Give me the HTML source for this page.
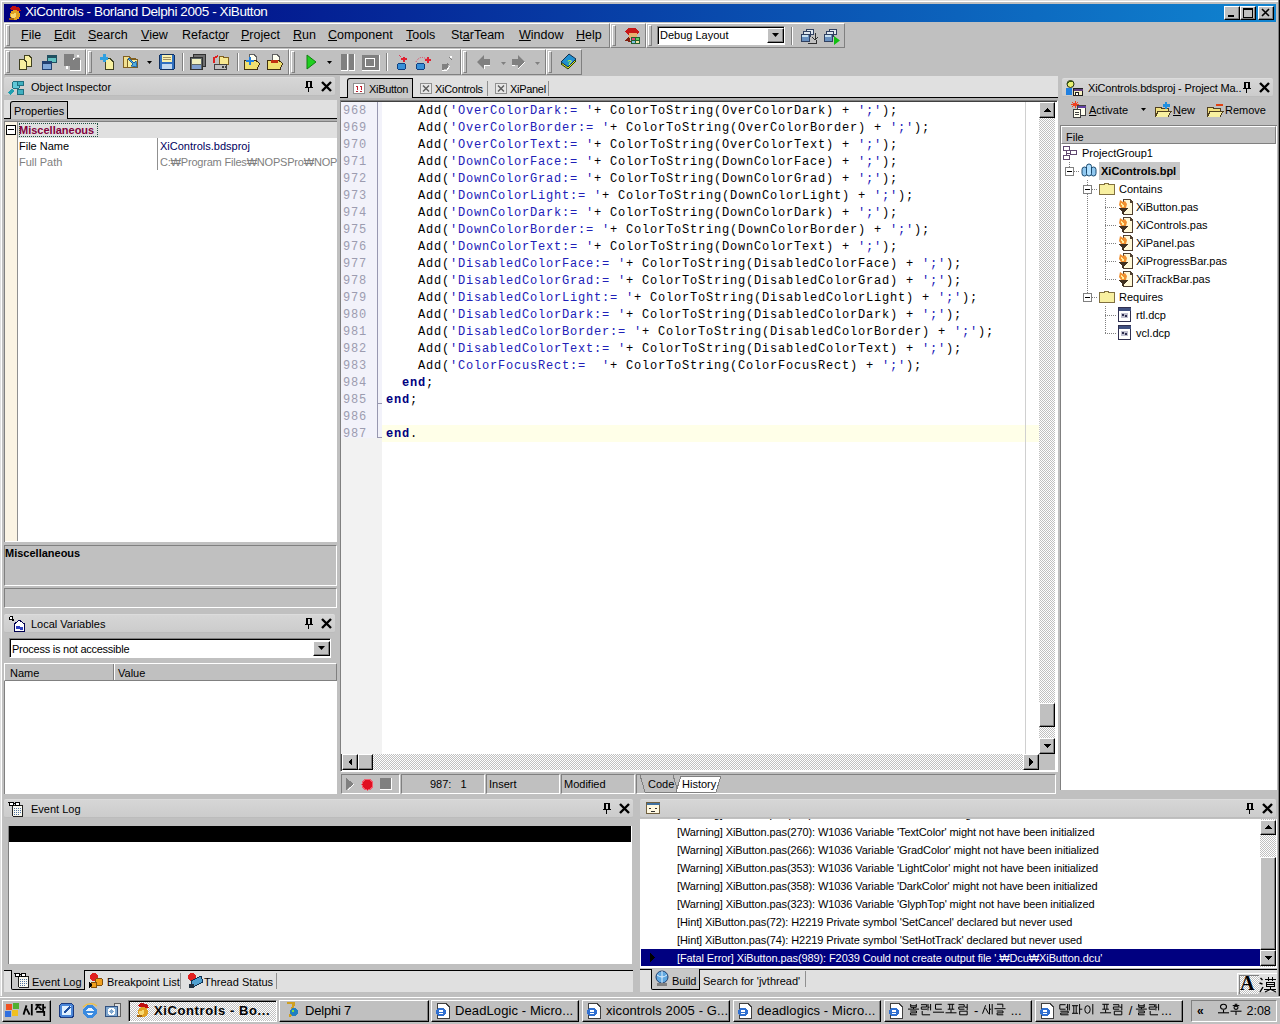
<!DOCTYPE html><html><head><meta charset="utf-8"><style>
*{margin:0;padding:0;box-sizing:border-box}
html,body{width:1280px;height:1024px;overflow:hidden;background:#c0c0c0;font-family:"Liberation Sans",sans-serif;font-size:11px;color:#000}
div,svg{position:absolute}
svg{overflow:visible}
.t{white-space:pre}
.r{border-top:1px solid #fff;border-left:1px solid #fff;border-right:1px solid #808080;border-bottom:1px solid #808080}
.r2{border-top:1px solid #fff;border-left:1px solid #fff;border-right:1px solid #000;border-bottom:1px solid #000;box-shadow:inset -1px -1px 0 #808080;background:#c0c0c0}
.sk{border-top:1px solid #808080;border-left:1px solid #808080;border-right:1px solid #fff;border-bottom:1px solid #fff}
.sk2{border-top:1px solid #808080;border-left:1px solid #808080;border-right:1px solid #fff;border-bottom:1px solid #fff;box-shadow:inset 1px 1px 0 #000}
.g{width:4px;border-left:1px solid #fff;border-right:1px solid #808080;border-top:1px solid #fff;border-bottom:1px solid #808080}
.sp{width:2px;border-left:1px solid #808080;border-right:1px solid #fff}
.u{text-decoration:underline}
.c{font-family:"Liberation Mono",monospace;font-size:12px;letter-spacing:0.8px;line-height:17px;white-space:pre}
.s{color:#2020b8}
.k{color:#000080;font-weight:bold}
.dith{background-color:#fff;background-image:linear-gradient(45deg,#c0c0c0 25%,transparent 25%,transparent 75%,#c0c0c0 75%),linear-gradient(45deg,#c0c0c0 25%,transparent 25%,transparent 75%,#c0c0c0 75%);background-size:2px 2px;background-position:0 0,1px 1px}
.ttl{background:linear-gradient(to bottom,#d6d6d6,#cccccc);border-top:1px solid #dcdcdc;border-bottom:1px solid #bcbcbc}
</style></head><body>
<div style="left:0px;top:0px;width:1280px;height:996px;border-top:1px solid #dfdfdf;border-left:1px solid #dfdfdf"></div>
<div style="left:1px;top:1px;width:1279px;height:995px;border-top:1px solid #fff;border-left:1px solid #fff"></div>
<div style="left:4px;top:4px;width:1272px;height:18px;background:linear-gradient(to right,#000080,#1084d0)"></div>
<div style="left:1278px;top:0px;width:1px;height:996px;background:#808080"></div>
<div style="left:1279px;top:0px;width:1px;height:996px;background:#000"></div>
<svg style="left:6px;top:5px" width="16" height="16" viewBox="0 0 16 16" shape-rendering="crispEdges"><path d="M3 4 L7 1 L13 2 L15 6 L12 6 Z" fill="#c01010"/><ellipse cx="9" cy="10" rx="5" ry="5" fill="#e0a020"/><path d="M5 9 L10 8 L10 12 L6 14 Z" fill="#f8d870"/><rect x="3" y="13" width="5" height="2" fill="#a06010"/></svg>
<div class="t" style="left:25px;top:5px;font-size:13.5px;line-height:13.5px;letter-spacing:-0.4px;color:#fff">XiControls - Borland Delphi 2005 - XiButton</div>
<div class="r2" style="left:1224px;top:6px;width:16px;height:14px;"></div>
<div class="r2" style="left:1240px;top:6px;width:16px;height:14px;"></div>
<div class="r2" style="left:1258px;top:6px;width:16px;height:14px;"></div>
<svg style="left:1224px;top:6px" width="50" height="14" viewBox="0 0 50 14" shape-rendering="crispEdges"><rect x="4" y="9" width="6" height="2" fill="#000"/><rect x="19" y="2" width="9" height="9" fill="none" stroke="#000"/><rect x="19" y="2" width="9" height="2" fill="#000"/><path d="M38 3 L45 10 M45 3 L38 10" stroke="#000" stroke-width="1.6" shape-rendering="geometricPrecision"/></svg>
<div class="r" style="left:4px;top:23px;width:606px;height:25px;"></div>
<div class="g" style="left:6px;top:25px;width:4px;height:21px;"></div>
<div class="t" style="left:21px;top:29px;font-size:12.5px;line-height:12.5px;"><span class="u">F</span>ile</div>
<div class="t" style="left:54px;top:29px;font-size:12.5px;line-height:12.5px;"><span class="u">E</span>dit</div>
<div class="t" style="left:88px;top:29px;font-size:12.5px;line-height:12.5px;"><span class="u">S</span>earch</div>
<div class="t" style="left:141px;top:29px;font-size:12.5px;line-height:12.5px;"><span class="u">V</span>iew</div>
<div class="t" style="left:182px;top:29px;font-size:12.5px;line-height:12.5px;">Refact<span class="u">o</span>r</div>
<div class="t" style="left:241px;top:29px;font-size:12.5px;line-height:12.5px;"><span class="u">P</span>roject</div>
<div class="t" style="left:293px;top:29px;font-size:12.5px;line-height:12.5px;"><span class="u">R</span>un</div>
<div class="t" style="left:328px;top:29px;font-size:12.5px;line-height:12.5px;"><span class="u">C</span>omponent</div>
<div class="t" style="left:406px;top:29px;font-size:12.5px;line-height:12.5px;"><span class="u">T</span>ools</div>
<div class="t" style="left:451px;top:29px;font-size:12.5px;line-height:12.5px;">St<span class="u">a</span>rTeam</div>
<div class="t" style="left:519px;top:29px;font-size:12.5px;line-height:12.5px;"><span class="u">W</span>indow</div>
<div class="t" style="left:576px;top:29px;font-size:12.5px;line-height:12.5px;"><span class="u">H</span>elp</div>
<div class="r" style="left:610px;top:23px;width:36px;height:25px;"></div>
<div class="g" style="left:612px;top:25px;width:4px;height:21px;"></div>
<svg style="left:623px;top:27px" width="18" height="17" viewBox="0 0 18 17" shape-rendering="crispEdges"><path d="M2 4 L6 1 L13 1 L16 5 L13 8 L5 8 Z" fill="#c81818"/><rect x="6" y="6" width="8" height="5" fill="#e8b070"/><path d="M2 14 L6 9 L8 15 Z" fill="#802010"/><rect x="8" y="10" width="9" height="7" fill="#206030"/><rect x="9" y="11" width="3" height="2" fill="#e04080"/><rect x="13" y="11" width="3" height="2" fill="#60d060"/><rect x="9" y="14" width="3" height="2" fill="#80c0e0"/><rect x="13" y="14" width="3" height="2" fill="#f0e0a0"/></svg>
<div class="r" style="left:646px;top:23px;width:199px;height:25px;"></div>
<div class="g" style="left:648px;top:25px;width:4px;height:21px;"></div>
<div class="sk2" style="left:657px;top:26px;width:128px;height:19px;background:#fff"></div>
<div class="t" style="left:660px;top:30px;font-size:11px;line-height:11px;">Debug Layout</div>
<div class="r2" style="left:767px;top:28px;width:17px;height:15px;"></div>
<svg style="left:772px;top:33px" width="7" height="4" viewBox="0 0 7 4" shape-rendering="crispEdges"><path d="M0 0 H7 L3.5 4 Z" fill="#000" shape-rendering="geometricPrecision"/></svg>
<div class="sp" style="left:791px;top:27px;width:2px;height:18px;"></div>
<svg style="left:800px;top:28px" width="17" height="17" viewBox="0 0 17 17" shape-rendering="crispEdges"><rect x="6" y="1" width="7" height="5" fill="#e0e8f0" stroke="#304060"/><rect x="3" y="3" width="7" height="5" fill="#e0e8f0" stroke="#304060"/><rect x="1" y="6" width="8" height="7" fill="#6890c0" stroke="#304060"/><rect x="2" y="7" width="6" height="2" fill="#c8e0f0"/></svg>
<svg style="left:823px;top:28px" width="17" height="17" viewBox="0 0 17 17" shape-rendering="crispEdges"><rect x="6" y="1" width="7" height="5" fill="#e0e8f0" stroke="#304060"/><rect x="3" y="3" width="7" height="5" fill="#e0e8f0" stroke="#304060"/><rect x="1" y="6" width="8" height="7" fill="#6890c0" stroke="#304060"/><rect x="2" y="7" width="6" height="2" fill="#c8e0f0"/></svg>
<svg style="left:810px;top:33px" width="10" height="12" viewBox="0 0 10 12" shape-rendering="crispEdges"><path d="M5 0 V6 M2 4 L5 7 L8 4 M-2 10 H6 V7" stroke="#303030" fill="none"/></svg>
<svg style="left:834px;top:36px" width="6" height="9" viewBox="0 0 6 9" shape-rendering="crispEdges"><path d="M0 0 L6 4.5 L0 9 Z" fill="#10c010" shape-rendering="geometricPrecision"/></svg>
<div class="r" style="left:4px;top:49px;width:82px;height:26px;"></div>
<div class="g" style="left:6px;top:51px;width:4px;height:22px;"></div>
<div class="r" style="left:86px;top:49px;width:203px;height:26px;"></div>
<div class="g" style="left:88px;top:51px;width:4px;height:22px;"></div>
<div class="r" style="left:289px;top:49px;width:172px;height:26px;"></div>
<div class="g" style="left:291px;top:51px;width:4px;height:22px;"></div>
<div class="r" style="left:461px;top:49px;width:85px;height:26px;"></div>
<div class="g" style="left:463px;top:51px;width:4px;height:22px;"></div>
<div class="r" style="left:546px;top:49px;width:36px;height:26px;"></div>
<div class="g" style="left:548px;top:51px;width:4px;height:22px;"></div>
<div class="sp" style="left:182px;top:53px;width:2px;height:18px;"></div>
<div class="sp" style="left:237px;top:53px;width:2px;height:18px;"></div>
<div class="sp" style="left:386px;top:53px;width:2px;height:18px;"></div>
<svg style="left:18px;top:54px" width="17" height="17" viewBox="0 0 17 17" shape-rendering="crispEdges"><path d="M6.5 1.5 H11 L13.5 4 V12.5 H6.5 Z" fill="#f8f0a0" stroke="#404020"/><path d="M1.5 5.5 H6 L8.5 8 V15.5 H1.5 Z" fill="#f8f0a0" stroke="#404020"/></svg>
<svg style="left:41px;top:54px" width="17" height="17" viewBox="0 0 17 17" shape-rendering="crispEdges"><rect x="6.5" y="1.5" width="9" height="7" fill="#60c0c0" stroke="#205060"/><rect x="6.5" y="1.5" width="9" height="2" fill="#205060"/><rect x="1.5" y="7.5" width="9" height="8" fill="#80a8d8" stroke="#204070"/><rect x="1.5" y="7.5" width="9" height="2" fill="#204070"/></svg>
<svg style="left:64px;top:54px" width="17" height="17" viewBox="0 0 17 17" shape-rendering="crispEdges"><rect x="0" y="0" width="10" height="12" fill="#808080"/><rect x="6" y="4" width="10" height="12" fill="#808080"/><path d="M9 6 V4 H11" stroke="#fff" fill="none"/><path d="M6 16 H16 V6" stroke="#fff" fill="none"/><rect x="13" y="1" width="2" height="2" fill="#fff"/><rect x="2" y="12" width="2" height="3" fill="#fff"/></svg>
<svg style="left:100px;top:54px" width="17" height="17" viewBox="0 0 17 17" shape-rendering="crispEdges"><path d="M5.5 4.5 H10 L13.5 8 V15.5 H5.5 Z" fill="#f8f0a0" stroke="#404020"/><path d="M4 0 V8 M0 4 H8" stroke="#30a0e0" stroke-width="3"/></svg>
<svg style="left:123px;top:54px" width="17" height="17" viewBox="0 0 17 17" shape-rendering="crispEdges"><path d="M0.5 2.5 H6 L8 4.5 H12.5 V13.5 H0.5 Z" fill="#f0e090" stroke="#806020"/><path d="M4.5 5.5 H14.5 V13.5 H4.5 Z" fill="#f8f0a0" stroke="#806020"/><path d="M5 5 L10 10 L8 12 L14 13 L13 7 L11 9 L6 4 Z" fill="#50b0e0" stroke="#2060a0" shape-rendering="geometricPrecision"/></svg>
<svg style="left:147px;top:61px" width="5" height="3" viewBox="0 0 5 3" shape-rendering="crispEdges"><path d="M0 0 H5 L2.5 3 Z" fill="#000" shape-rendering="geometricPrecision"/></svg>
<svg style="left:159px;top:54px" width="17" height="16" viewBox="0 0 17 16" shape-rendering="crispEdges"><rect x="0.5" y="0.5" width="15" height="15" rx="2" fill="#3070c0" stroke="#103060"/><rect x="3" y="1" width="10" height="7" fill="#f8f0b0"/><rect x="4" y="3" width="8" height="1" fill="#a09060"/><rect x="4" y="5" width="8" height="1" fill="#a09060"/><rect x="3" y="10" width="10" height="5" fill="#c0d8f0"/></svg>
<svg style="left:190px;top:54px" width="17" height="17" viewBox="0 0 17 17" shape-rendering="crispEdges"><rect x="3.5" y="0.5" width="12" height="12" fill="#707070" stroke="#303030"/><rect x="0.5" y="3.5" width="12" height="12" fill="#606868" stroke="#303030"/><rect x="2" y="5" width="9" height="5" fill="#f0f0c0"/><rect x="2" y="11" width="9" height="4" fill="#80a0d0"/></svg>
<svg style="left:213px;top:54px" width="17" height="17" viewBox="0 0 17 17" shape-rendering="crispEdges"><path d="M6.5 2.5 H10 L11 3.5 H15.5 V10.5 H6.5 Z" fill="#f8e890" stroke="#806020"/><path d="M1 9 V4 L5 2" stroke="#e02020" stroke-width="1.5" fill="none"/><rect x="1.5" y="10.5" width="12" height="5" fill="#c0c0c0" stroke="#404040"/><rect x="9" y="12" width="2" height="2" fill="#404040"/><rect x="12" y="12" width="1" height="2" fill="#404040"/></svg>
<svg style="left:244px;top:54px" width="17" height="17" viewBox="0 0 17 17" shape-rendering="crispEdges"><path d="M5.5 0.5 H10 L12.5 3 V10.5 H5.5 Z" fill="#fffff0" stroke="#606060"/><path d="M0.5 6.5 H12 L15.5 9.5 L13 15.5 H0.5 Z" fill="#f0e070" stroke="#403010"/><path d="M6 3 V11 M2 7 H10" stroke="#2080e0" stroke-width="2.5"/></svg>
<svg style="left:267px;top:54px" width="17" height="17" viewBox="0 0 17 17" shape-rendering="crispEdges"><path d="M5.5 0.5 H10 L12.5 3 V10.5 H5.5 Z" fill="#fffff0" stroke="#606060"/><path d="M0.5 6.5 H12 L15.5 9.5 L13 15.5 H0.5 Z" fill="#f0e070" stroke="#403010"/><rect x="4" y="6" width="7" height="3" fill="#c03010"/></svg>
<svg style="left:306px;top:54px" width="11" height="16" viewBox="0 0 11 16" shape-rendering="crispEdges"><path d="M1 1 L10 8 L1 15 Z" fill="#20d020" stroke="#108010" shape-rendering="geometricPrecision"/></svg>
<svg style="left:327px;top:61px" width="5" height="3" viewBox="0 0 5 3" shape-rendering="crispEdges"><path d="M0 0 H5 L2.5 3 Z" fill="#000" shape-rendering="geometricPrecision"/></svg>
<svg style="left:341px;top:54px" width="14" height="17" viewBox="0 0 14 17" shape-rendering="crispEdges"><rect x="0" y="0" width="6" height="16" fill="#808080"/><rect x="8" y="0" width="5" height="16" fill="#808080"/><path d="M6 0 V16 H0 M13 0 V16 H8" stroke="#fff" fill="none"/></svg>
<svg style="left:362px;top:55px" width="18" height="16" viewBox="0 0 18 16" shape-rendering="crispEdges"><rect x="0" y="0" width="17" height="15" fill="#808080"/><rect x="3.5" y="3.5" width="9" height="8" fill="none" stroke="#fff"/><rect x="5" y="5" width="7" height="6" fill="#808080"/><path d="M0 15 H17 V0" stroke="#fff" fill="none"/></svg>
<svg style="left:397px;top:54px" width="12" height="17" viewBox="0 0 12 17" shape-rendering="crispEdges"><path d="M2 1 L6 5" stroke="#e04060" stroke-dasharray="1 1" fill="none"/><path d="M4 5 H10 M7 3 V8" stroke="#e02030" stroke-width="2"/><rect x="0.5" y="9.5" width="8" height="6" rx="2" fill="#3890d8" stroke="#104080"/></svg>
<svg style="left:415px;top:54px" width="16" height="17" viewBox="0 0 16 17" shape-rendering="crispEdges"><path d="M1 8 Q5 0 13 6" stroke="#e04060" stroke-dasharray="1 1" fill="none" shape-rendering="geometricPrecision"/><path d="M10 6 H16 M13 3 V9" stroke="#e02030" stroke-width="2"/><rect x="1.5" y="9.5" width="8" height="6" rx="2" fill="#3890d8" stroke="#104080"/></svg>
<svg style="left:440px;top:54px" width="14" height="17" viewBox="0 0 14 17" shape-rendering="crispEdges"><path d="M1 15 L7 9 L9 11 L3 16 Z" fill="#808080"/><rect x="2" y="10" width="6" height="5" fill="#808080"/><path d="M9 3 L12 6" stroke="#808080"/><rect x="10" y="2" width="2" height="2" fill="#fff"/><path d="M2 16 H7 L10 12" stroke="#fff" fill="none"/></svg>
<svg style="left:477px;top:55px" width="14" height="15" viewBox="0 0 14 15" shape-rendering="crispEdges"><path d="M0 7 L7 0 V4 H13 V10 H7 V14 Z" fill="#808080" shape-rendering="geometricPrecision"/><path d="M7 14 V10 H13" stroke="#fff" fill="none"/></svg>
<svg style="left:501px;top:62px" width="5" height="3" viewBox="0 0 5 3" shape-rendering="crispEdges"><path d="M0 0 H5 L2.5 3 Z" fill="#808080" shape-rendering="geometricPrecision"/></svg>
<svg style="left:512px;top:55px" width="14" height="15" viewBox="0 0 14 15" shape-rendering="crispEdges"><path d="M13 7 L6 0 V4 H0 V10 H6 V14 Z" fill="#808080" shape-rendering="geometricPrecision"/><path d="M6 14 L13 7 M0 10 H3" stroke="#fff" fill="none"/></svg>
<svg style="left:535px;top:62px" width="5" height="3" viewBox="0 0 5 3" shape-rendering="crispEdges"><path d="M0 0 H5 L2.5 3 Z" fill="#808080" shape-rendering="geometricPrecision"/></svg>
<svg style="left:560px;top:54px" width="17" height="16" viewBox="0 0 17 16" shape-rendering="crispEdges"><path d="M1 10 L9 2 L16 7 L8 15 Z" fill="#e8e820" stroke="#204000" shape-rendering="geometricPrecision"/><path d="M1 8 L9 0 L16 5 L8 13 Z" fill="#2090d0" stroke="#103050" shape-rendering="geometricPrecision"/><text x="7" y="11" font-size="8" font-weight="bold" fill="#c0ff40" font-family="Liberation Sans">?</text></svg>
<div class="ttl" style="left:4px;top:77px;width:331px;height:19px;border-radius:2px"></div>
<div class="t" style="left:31px;top:82px;font-size:11px;line-height:11px;">Object Inspector</div>
<svg style="left:305px;top:81px" width="8" height="11" viewBox="0 0 8 11" shape-rendering="crispEdges"><rect x="1" y="0" width="6" height="1" fill="#000"/><rect x="1" y="0" width="2" height="6" fill="#000"/><rect x="5" y="0" width="2" height="6" fill="#000"/><rect x="0" y="6" width="8" height="1" fill="#000"/><rect x="3" y="7" width="1" height="4" fill="#000"/></svg>
<svg style="left:321px;top:81px" width="11" height="11" viewBox="0 0 11 11" shape-rendering="crispEdges"><path d="M1 1 L10 10 M10 1 L1 10" stroke="#000" stroke-width="2.4" shape-rendering="geometricPrecision"/></svg>
<svg style="left:8px;top:80px" width="18" height="16" viewBox="0 0 18 16" shape-rendering="crispEdges"><circle cx="8" cy="5" r="4" fill="#60c8d8" stroke="#207080"/><rect x="9" y="1" width="6" height="4" fill="#40b0c0" stroke="#207080"/><rect x="9" y="9" width="6" height="5" fill="#40b0c0" stroke="#207080"/><path d="M1 14 L5 10" stroke="#20a0b0" stroke-width="3"/></svg>
<div style="left:4px;top:100px;width:333px;height:18px;background:#e0e0e0"></div>
<div style="left:4px;top:118px;width:333px;height:1px;background:#000"></div>
<div style="left:10px;top:101px;width:58px;height:18px;background:#c8c8c8;border:1px solid #000;border-bottom:none;border-top-left-radius:3px"></div>
<div class="t" style="left:14px;top:106px;font-size:11px;line-height:11px;">Properties</div>
<div style="left:4px;top:119px;width:333px;height:2px;background:#b0b0b0"></div>
<div style="left:4px;top:121px;width:333px;height:421px;background:#fff;border-top:1px solid #808080;border-left:1px solid #808080"></div>
<div style="left:5px;top:122px;width:12px;height:419px;background:#fbf4e4"></div>
<div style="left:17px;top:122px;width:1px;height:419px;background:#909090"></div>
<div style="left:18px;top:122px;width:319px;height:16px;background:#e0e0e0"></div>
<div style="left:19px;top:123px;width:79px;height:14px;border:1px dotted #205040"></div>
<div class="t" style="left:19px;top:125px;font-size:11px;line-height:11px;color:#80003c;font-weight:bold">Miscellaneous</div>
<div style="left:6px;top:125px;width:10px;height:10px;border:1px solid #000;background:#fff"></div>
<div style="left:8px;top:129px;width:6px;height:1px;background:#000"></div>
<div class="t" style="left:19px;top:141px;font-size:11px;line-height:11px;">File Name</div>
<div class="t" style="left:19px;top:157px;font-size:11px;line-height:11px;color:#808080">Full Path</div>
<div style="left:157px;top:138px;width:1px;height:32px;background:#909090"></div>
<div class="t" style="left:160px;top:141px;font-size:11px;line-height:11px;color:#000060">XiControls.bdsproj</div>
<div class="t" style="left:160px;top:157px;font-size:11px;line-height:11px;color:#808080;width:177px;overflow:hidden;letter-spacing:-0.2px">C:&#x20A9;Program Files&#x20A9;NOPSPro&#x20A9;NOPSPro</div>
<div class="sk" style="left:4px;top:545px;width:333px;height:41px;"></div>
<div class="t" style="left:5px;top:548px;font-size:11px;line-height:11px;font-weight:bold">Miscellaneous</div>
<div class="sk" style="left:4px;top:588px;width:333px;height:20px;"></div>
<div class="ttl" style="left:4px;top:614px;width:331px;height:19px;border-radius:2px"></div>
<div class="t" style="left:31px;top:619px;font-size:11px;line-height:11px;">Local Variables</div>
<svg style="left:305px;top:618px" width="8" height="11" viewBox="0 0 8 11" shape-rendering="crispEdges"><rect x="1" y="0" width="6" height="1" fill="#000"/><rect x="1" y="0" width="2" height="6" fill="#000"/><rect x="5" y="0" width="2" height="6" fill="#000"/><rect x="0" y="6" width="8" height="1" fill="#000"/><rect x="3" y="7" width="1" height="4" fill="#000"/></svg>
<svg style="left:321px;top:618px" width="11" height="11" viewBox="0 0 11 11" shape-rendering="crispEdges"><path d="M1 1 L10 10 M10 1 L1 10" stroke="#000" stroke-width="2.4" shape-rendering="geometricPrecision"/></svg>
<svg style="left:9px;top:616px" width="18" height="16" viewBox="0 0 18 16" shape-rendering="crispEdges"><path d="M1 1 L5 5" stroke="#000" stroke-width="1.5"/><circle cx="2" cy="2" r="1.5" fill="#fff" stroke="#000"/><path d="M5.5 8 L10 4 L15.5 8 V15.5 H5.5 Z" fill="#fff" stroke="#000050"/><rect x="7" y="10" width="4" height="3" fill="#3040c0"/><rect x="11" y="11" width="3" height="3" fill="#3040c0"/></svg>
<div class="sk2" style="left:9px;top:638px;width:322px;height:20px;background:#fff"></div>
<div class="t" style="left:12px;top:644px;font-size:11px;line-height:11px;letter-spacing:-0.25px">Process is not accessible</div>
<div class="r2" style="left:313px;top:641px;width:17px;height:15px;"></div>
<svg style="left:318px;top:646px" width="7" height="4" viewBox="0 0 7 4" shape-rendering="crispEdges"><path d="M0 0 H7 L3.5 4 Z" fill="#000" shape-rendering="geometricPrecision"/></svg>
<div class="r" style="left:4px;top:663px;width:333px;height:18px;"></div>
<div style="left:113px;top:664px;width:1px;height:16px;background:#808080"></div>
<div style="left:114px;top:664px;width:1px;height:16px;background:#fff"></div>
<div class="t" style="left:10px;top:668px;font-size:11px;line-height:11px;">Name</div>
<div class="t" style="left:118px;top:668px;font-size:11px;line-height:11px;">Value</div>
<div style="left:4px;top:681px;width:333px;height:113px;background:#fff;border-left:1px solid #808080"></div>
<div style="left:340px;top:76px;width:718px;height:22px;background:#e0e0e0"></div>
<div style="left:340px;top:97px;width:718px;height:1px;background:#000"></div>
<div style="left:340px;top:98px;width:718px;height:2px;background:#b4b4b4"></div>
<div style="left:347px;top:78px;width:66px;height:20px;background:#c8c8c8;border:1px solid #000;border-bottom:none;border-top-left-radius:3px"></div>
<svg style="left:353px;top:83px" width="12" height="11" viewBox="0 0 12 11" shape-rendering="crispEdges"><rect x="0.5" y="0.5" width="11" height="10" fill="#fff" stroke="#909090"/><path d="M3 3 H5 M7 3 H9 M3 8 H5 M7 8 H9 M4 4 V7 M8 4 V7" stroke="#c02030"/></svg>
<div class="t" style="left:369px;top:84px;font-size:11px;line-height:11px;letter-spacing:-0.3px">XiButton</div>
<svg style="left:420px;top:83px" width="12" height="11" viewBox="0 0 12 11" shape-rendering="crispEdges"><rect x="0.5" y="0.5" width="11" height="10" fill="#e8e8e8" stroke="#909090"/><path d="M3 2.5 L9 8.5 M9 2.5 L3 8.5" stroke="#606060" stroke-width="1.5" shape-rendering="geometricPrecision"/></svg>
<svg style="left:495px;top:83px" width="12" height="11" viewBox="0 0 12 11" shape-rendering="crispEdges"><rect x="0.5" y="0.5" width="11" height="10" fill="#e8e8e8" stroke="#909090"/><path d="M3 2.5 L9 8.5 M9 2.5 L3 8.5" stroke="#606060" stroke-width="1.5" shape-rendering="geometricPrecision"/></svg>
<div class="t" style="left:435px;top:84px;font-size:11px;line-height:11px;letter-spacing:-0.3px">XiControls</div>
<div style="left:487px;top:81px;width:1px;height:15px;background:#909090"></div>
<div class="t" style="left:510px;top:84px;font-size:11px;line-height:11px;letter-spacing:-0.3px">XiPanel</div>
<div style="left:548px;top:81px;width:1px;height:15px;background:#909090"></div>
<div style="left:340px;top:100px;width:718px;height:672px;border-top:1px solid #808080;border-left:1px solid #808080;border-right:1px solid #fff;border-bottom:1px solid #fff"></div>
<div style="left:341px;top:101px;width:716px;height:670px;background:#fff;border-top:1px solid #404040;border-left:1px solid #404040"></div>
<div style="left:341px;top:102px;width:41px;height:336px;background:#f2f2fa"></div>
<div style="left:341px;top:438px;width:41px;height:316px;background:#f2f2f2"></div>
<div style="left:377px;top:102px;width:1px;height:336px;background:#9898b0"></div>
<div style="left:377px;top:403px;width:5px;height:1px;background:#9898b0"></div>
<div style="left:377px;top:437px;width:5px;height:1px;background:#9898b0"></div>
<div style="left:382px;top:425px;width:657px;height:17px;background:#ffffe8"></div>
<div style="left:1025px;top:102px;width:1px;height:652px;background:#d0d0d0"></div>
<div class="dith" style="left:1039px;top:102px;width:16px;height:652px;"></div>
<div class="r2" style="left:1039px;top:102px;width:16px;height:16px;"></div>
<svg style="left:1043px;top:108px" width="8" height="4" viewBox="0 0 8 4" shape-rendering="crispEdges"><path d="M0 4 L4 0 L8 4 Z" fill="#000"/></svg>
<div class="r2" style="left:1039px;top:703px;width:16px;height:24px;"></div>
<div class="r2" style="left:1039px;top:738px;width:16px;height:16px;"></div>
<svg style="left:1043px;top:744px" width="8" height="4" viewBox="0 0 8 4" shape-rendering="crispEdges"><path d="M0 0 L8 0 L4 4 Z" fill="#000"/></svg>
<div class="dith" style="left:342px;top:754px;width:697px;height:16px;"></div>
<div class="r2" style="left:342px;top:754px;width:16px;height:16px;"></div>
<svg style="left:348px;top:758px" width="4" height="8" viewBox="0 0 4 8" shape-rendering="crispEdges"><path d="M4 0 V8 L0 4 Z" fill="#000"/></svg>
<div class="r2" style="left:358px;top:754px;width:15px;height:16px;"></div>
<div class="r2" style="left:1023px;top:754px;width:16px;height:16px;"></div>
<svg style="left:1029px;top:758px" width="4" height="8" viewBox="0 0 4 8" shape-rendering="crispEdges"><path d="M0 0 V8 L4 4 Z" fill="#000"/></svg>
<div style="left:1039px;top:754px;width:16px;height:16px;background:#c0c0c0"></div>
<div class="c" style="left:343px;top:103px;color:#9c9cb0">968
969
970
971
972
973
974
975
976
977
978
979
980
981
982
983
984
985
986
987</div>
<div class="c" style="left:386px;top:103px">    Add(<span class="s">'OverColorDark:= '</span>+ ColorToString(OverColorDark) + <span class="s">';'</span>);
    Add(<span class="s">'OverColorBorder:= '</span>+ ColorToString(OverColorBorder) + <span class="s">';'</span>);
    Add(<span class="s">'OverColorText:= '</span>+ ColorToString(OverColorText) + <span class="s">';'</span>);
    Add(<span class="s">'DownColorFace:= '</span>+ ColorToString(DownColorFace) + <span class="s">';'</span>);
    Add(<span class="s">'DownColorGrad:= '</span>+ ColorToString(DownColorGrad) + <span class="s">';'</span>);
    Add(<span class="s">'DownColorLight:= '</span>+ ColorToString(DownColorLight) + <span class="s">';'</span>);
    Add(<span class="s">'DownColorDark:= '</span>+ ColorToString(DownColorDark) + <span class="s">';'</span>);
    Add(<span class="s">'DownColorBorder:= '</span>+ ColorToString(DownColorBorder) + <span class="s">';'</span>);
    Add(<span class="s">'DownColorText:= '</span>+ ColorToString(DownColorText) + <span class="s">';'</span>);
    Add(<span class="s">'DisabledColorFace:= '</span>+ ColorToString(DisabledColorFace) + <span class="s">';'</span>);
    Add(<span class="s">'DisabledColorGrad:= '</span>+ ColorToString(DisabledColorGrad) + <span class="s">';'</span>);
    Add(<span class="s">'DisabledColorLight:= '</span>+ ColorToString(DisabledColorLight) + <span class="s">';'</span>);
    Add(<span class="s">'DisabledColorDark:= '</span>+ ColorToString(DisabledColorDark) + <span class="s">';'</span>);
    Add(<span class="s">'DisabledColorBorder:= '</span>+ ColorToString(DisabledColorBorder) + <span class="s">';'</span>);
    Add(<span class="s">'DisabledColorText:= '</span>+ ColorToString(DisabledColorText) + <span class="s">';'</span>);
    Add(<span class="s">'ColorFocusRect:=  '</span>+ ColorToString(ColorFocusRect) + <span class="s">';'</span>);
  <span class="k">end</span>;
<span class="k">end</span>;

<span class="k">end</span>.</div>
<div style="left:340px;top:773px;width:718px;height:22px;background:#c0c0c0"></div>
<div class="sk" style="left:341px;top:774px;width:59px;height:20px;"></div>
<svg style="left:345px;top:778px" width="12" height="13" viewBox="0 0 12 13" shape-rendering="crispEdges"><path d="M1 0 L9 6 L1 12 Z" fill="#808080"/><path d="M9 6 L3 12" stroke="#fff" stroke-width="1.3"/></svg>
<svg style="left:361px;top:778px" width="13" height="13" viewBox="0 0 13 13" shape-rendering="crispEdges"><circle cx="6.5" cy="6.5" r="5.5" fill="#e01020" stroke="#f06070"/></svg>
<svg style="left:380px;top:778px" width="12" height="12" viewBox="0 0 12 12" shape-rendering="crispEdges"><rect x="0" y="0" width="11" height="11" fill="#808080"/><path d="M0 11.5 H11.5 V0" stroke="#fff" fill="none"/></svg>
<div class="sk" style="left:401px;top:774px;width:84px;height:20px;"></div>
<div class="t" style="left:430px;top:779px;font-size:11px;line-height:11px;">987:   1</div>
<div class="sk" style="left:486px;top:774px;width:74px;height:20px;"></div>
<div class="t" style="left:489px;top:779px;font-size:11px;line-height:11px;">Insert</div>
<div class="sk" style="left:561px;top:774px;width:74px;height:20px;"></div>
<div class="t" style="left:564px;top:779px;font-size:11px;line-height:11px;">Modified</div>
<div class="sk" style="left:636px;top:774px;width:420px;height:20px;"></div>
<svg style="left:638px;top:775px" width="90" height="18" viewBox="0 0 90 18" shape-rendering="crispEdges"><path d="M2 0 L7 17 H40 L35 0" fill="#c0c0c0" stroke="#808080"/><path d="M43 1 L38 17 H78 L83 1 Z" fill="#fff" stroke="#808080"/></svg>
<div class="t" style="left:648px;top:779px;font-size:11px;line-height:11px;">Code</div>
<div class="t" style="left:682px;top:779px;font-size:11px;line-height:11px;">History</div>
<div class="ttl" style="left:1062px;top:78px;width:211px;height:19px;border-radius:2px"></div>
<div class="t" style="left:1088px;top:83px;font-size:11px;line-height:11px;letter-spacing:-0.15px">XiControls.bdsproj - Project Ma..</div>
<svg style="left:1243px;top:82px" width="8" height="11" viewBox="0 0 8 11" shape-rendering="crispEdges"><rect x="1" y="0" width="6" height="1" fill="#000"/><rect x="1" y="0" width="2" height="6" fill="#000"/><rect x="5" y="0" width="2" height="6" fill="#000"/><rect x="0" y="6" width="8" height="1" fill="#000"/><rect x="3" y="7" width="1" height="4" fill="#000"/></svg>
<svg style="left:1259px;top:82px" width="11" height="11" viewBox="0 0 11 11" shape-rendering="crispEdges"><path d="M1 1 L10 10 M10 1 L1 10" stroke="#000" stroke-width="2.4" shape-rendering="geometricPrecision"/></svg>
<svg style="left:1066px;top:80px" width="17" height="16" viewBox="0 0 17 16" shape-rendering="crispEdges"><circle cx="4.5" cy="4" r="3.5" fill="#e8f070" stroke="#203010" shape-rendering="geometricPrecision"/><path d="M1 4 Q3 0 7 2" stroke="#305010" fill="none"/><rect x="0" y="8" width="6" height="7" fill="#2080e0"/><rect x="7.5" y="8.5" width="9" height="7" fill="#f8f0c0" stroke="#202020"/><rect x="7.5" y="8.5" width="9" height="2" fill="#604080"/><rect x="9" y="12" width="3" height="3" fill="#fff" stroke="#202020"/></svg>
<svg style="left:1071px;top:101px" width="16" height="17" viewBox="0 0 16 17" shape-rendering="crispEdges"><path d="M0 3 H8 M4 0 V7 M1 1 L7 6 M7 1 L1 6" stroke="#f04020"/><rect x="6.5" y="4.5" width="8" height="10" fill="#fffff0" stroke="#404040"/><rect x="6.5" y="4.5" width="8" height="2" fill="#6040a0"/><rect x="2.5" y="8.5" width="7" height="8" fill="#fffff0" stroke="#404040"/><path d="M4 11 H8 M4 13 H8" stroke="#404040"/></svg>
<div class="t" style="left:1089px;top:105px;font-size:11px;line-height:11px;"><span class="u">A</span>ctivate</div>
<svg style="left:1141px;top:108px" width="5" height="3" viewBox="0 0 5 3" shape-rendering="crispEdges"><path d="M0 0 H5 L2.5 3 Z" fill="#000" shape-rendering="geometricPrecision"/></svg>
<svg style="left:1155px;top:101px" width="17" height="17" viewBox="0 0 17 17" shape-rendering="crispEdges"><path d="M0.5 6.5 H6 L7 7.5 H13 V15.5 H0.5 Z" fill="#f0e080" stroke="#504020"/><path d="M0.5 15.5 L3 10.5 H16 L13 15.5" fill="#f8f0a0" stroke="#504020"/><path d="M11 1 V8 M7.5 4.5 H14.5" stroke="#2090e0" stroke-width="2.5"/></svg>
<div class="t" style="left:1173px;top:105px;font-size:11px;line-height:11px;"><span class="u">N</span>ew</div>
<svg style="left:1207px;top:101px" width="17" height="17" viewBox="0 0 17 17" shape-rendering="crispEdges"><path d="M0.5 6.5 H6 L7 7.5 H13 V15.5 H0.5 Z" fill="#f0e080" stroke="#504020"/><path d="M0.5 15.5 L3 10.5 H16 L13 15.5" fill="#f8f0a0" stroke="#504020"/><rect x="9" y="3" width="7" height="2" fill="#e04010"/></svg>
<div class="t" style="left:1225px;top:105px;font-size:11px;line-height:11px;">Remove</div>
<div style="left:1060px;top:125px;width:217px;height:665px;background:#fff;border-top:1px solid #808080;border-left:1px solid #808080"></div>
<div class="r" style="left:1061px;top:126px;width:215px;height:18px;background:#c0c0c0"></div>
<div class="t" style="left:1066px;top:132px;font-size:11px;line-height:11px;">File</div>
<svg style="left:1063px;top:146px" width="15" height="15" viewBox="0 0 15 15" shape-rendering="crispEdges"><rect x="0.5" y="0.5" width="6" height="4" fill="#fff" stroke="#604870"/><rect x="7.5" y="4.5" width="6" height="4" fill="#fff" stroke="#604870"/><rect x="0.5" y="9.5" width="6" height="4" fill="#fff" stroke="#604870"/><path d="M3 5 V9 M7 7 H3" stroke="#604870"/></svg>
<div class="t" style="left:1082px;top:148px;font-size:11px;line-height:11px;">ProjectGroup1</div>
<div style="left:1099px;top:162px;width:81px;height:18px;background:#c8c8c8"></div>
<div class="t" style="left:1101px;top:166px;font-size:11px;line-height:11px;font-weight:bold">XiControls.bpl</div>
<svg style="left:1065px;top:167px" width="9" height="9" viewBox="0 0 9 9" shape-rendering="crispEdges"><rect x="0.5" y="0.5" width="8" height="8" fill="#fff" stroke="#808080"/><path d="M2 4.5 H7" stroke="#000"/></svg>
<svg style="left:1083px;top:185px" width="9" height="9" viewBox="0 0 9 9" shape-rendering="crispEdges"><rect x="0.5" y="0.5" width="8" height="8" fill="#fff" stroke="#808080"/><path d="M2 4.5 H7" stroke="#000"/></svg>
<svg style="left:1083px;top:293px" width="9" height="9" viewBox="0 0 9 9" shape-rendering="crispEdges"><rect x="0.5" y="0.5" width="8" height="8" fill="#fff" stroke="#808080"/><path d="M2 4.5 H7" stroke="#000"/></svg>
<svg style="left:1081px;top:163px" width="17" height="15" viewBox="0 0 17 15" shape-rendering="crispEdges"><g shape-rendering="geometricPrecision" stroke="#1a4a70" stroke-width="1"><rect x="1" y="4" width="5" height="9" rx="2.5" fill="#90c8f0"/><rect x="10" y="4" width="5" height="9" rx="2.5" fill="#90c8f0"/><rect x="5.5" y="1" width="5" height="12" rx="2.5" fill="#b0e0ff"/></g></svg>
<div style="left:1069px;top:162px;width:1px;height:5px;background-image:linear-gradient(to bottom,#808080 50%,transparent 50%);background-size:1px 2px"></div>
<div style="left:1074px;top:171px;width:6px;height:1px;background-image:linear-gradient(to right,#808080 50%,transparent 50%);background-size:2px 1px"></div>
<div style="left:1087px;top:180px;width:1px;height:5px;background-image:linear-gradient(to bottom,#808080 50%,transparent 50%);background-size:1px 2px"></div>
<div style="left:1087px;top:194px;width:1px;height:99px;background-image:linear-gradient(to bottom,#808080 50%,transparent 50%);background-size:1px 2px"></div>
<div style="left:1092px;top:189px;width:6px;height:1px;background-image:linear-gradient(to right,#808080 50%,transparent 50%);background-size:2px 1px"></div>
<div style="left:1092px;top:297px;width:6px;height:1px;background-image:linear-gradient(to right,#808080 50%,transparent 50%);background-size:2px 1px"></div>
<div style="left:1105px;top:198px;width:1px;height:81px;background-image:linear-gradient(to bottom,#808080 50%,transparent 50%);background-size:1px 2px"></div>
<div style="left:1105px;top:306px;width:1px;height:27px;background-image:linear-gradient(to bottom,#808080 50%,transparent 50%);background-size:1px 2px"></div>
<div style="left:1105px;top:207px;width:12px;height:1px;background-image:linear-gradient(to right,#808080 50%,transparent 50%);background-size:2px 1px"></div>
<div style="left:1105px;top:225px;width:12px;height:1px;background-image:linear-gradient(to right,#808080 50%,transparent 50%);background-size:2px 1px"></div>
<div style="left:1105px;top:243px;width:12px;height:1px;background-image:linear-gradient(to right,#808080 50%,transparent 50%);background-size:2px 1px"></div>
<div style="left:1105px;top:261px;width:12px;height:1px;background-image:linear-gradient(to right,#808080 50%,transparent 50%);background-size:2px 1px"></div>
<div style="left:1105px;top:279px;width:12px;height:1px;background-image:linear-gradient(to right,#808080 50%,transparent 50%);background-size:2px 1px"></div>
<div style="left:1105px;top:315px;width:12px;height:1px;background-image:linear-gradient(to right,#808080 50%,transparent 50%);background-size:2px 1px"></div>
<div style="left:1105px;top:333px;width:12px;height:1px;background-image:linear-gradient(to right,#808080 50%,transparent 50%);background-size:2px 1px"></div>
<svg style="left:1099px;top:182px" width="16" height="13" viewBox="0 0 16 13" shape-rendering="crispEdges"><path d="M0.5 2.5 H5 L6 1.5 H9 L10 2.5 H15.5 V12.5 H0.5 Z" fill="#f8f0a0" stroke="#807040"/></svg>
<svg style="left:1099px;top:290px" width="16" height="13" viewBox="0 0 16 13" shape-rendering="crispEdges"><path d="M0.5 2.5 H5 L6 1.5 H9 L10 2.5 H15.5 V12.5 H0.5 Z" fill="#f8f0a0" stroke="#807040"/></svg>
<svg style="left:1117px;top:199px" width="17" height="17" viewBox="0 0 17 17" shape-rendering="crispEdges"><path d="M6.5 0.5 H13 L15.5 3 V15.5 H6.5 Z" fill="#fff8d8" stroke="#504030"/><path d="M13 0.5 V3 H15.5" stroke="#504030" fill="none"/><path d="M3 1 L6 3 L8 2 L10 5 L9 9 L4 9 L2 6 Z" fill="#f09030" shape-rendering="geometricPrecision"/><path d="M4 4 L6 6 L7 5 L7 8 L5 8 Z" fill="#fff0a0"/><path d="M1 9 H11 L7 13 V15 H5 V13 Z" fill="#403020"/></svg>
<div class="t" style="left:1136px;top:202px;font-size:11px;line-height:11px;">XiButton.pas</div>
<svg style="left:1117px;top:217px" width="17" height="17" viewBox="0 0 17 17" shape-rendering="crispEdges"><path d="M6.5 0.5 H13 L15.5 3 V15.5 H6.5 Z" fill="#fff8d8" stroke="#504030"/><path d="M13 0.5 V3 H15.5" stroke="#504030" fill="none"/><path d="M3 1 L6 3 L8 2 L10 5 L9 9 L4 9 L2 6 Z" fill="#f09030" shape-rendering="geometricPrecision"/><path d="M4 4 L6 6 L7 5 L7 8 L5 8 Z" fill="#fff0a0"/><path d="M1 9 H11 L7 13 V15 H5 V13 Z" fill="#403020"/></svg>
<div class="t" style="left:1136px;top:220px;font-size:11px;line-height:11px;">XiControls.pas</div>
<svg style="left:1117px;top:235px" width="17" height="17" viewBox="0 0 17 17" shape-rendering="crispEdges"><path d="M6.5 0.5 H13 L15.5 3 V15.5 H6.5 Z" fill="#fff8d8" stroke="#504030"/><path d="M13 0.5 V3 H15.5" stroke="#504030" fill="none"/><path d="M3 1 L6 3 L8 2 L10 5 L9 9 L4 9 L2 6 Z" fill="#f09030" shape-rendering="geometricPrecision"/><path d="M4 4 L6 6 L7 5 L7 8 L5 8 Z" fill="#fff0a0"/><path d="M1 9 H11 L7 13 V15 H5 V13 Z" fill="#403020"/></svg>
<div class="t" style="left:1136px;top:238px;font-size:11px;line-height:11px;">XiPanel.pas</div>
<svg style="left:1117px;top:253px" width="17" height="17" viewBox="0 0 17 17" shape-rendering="crispEdges"><path d="M6.5 0.5 H13 L15.5 3 V15.5 H6.5 Z" fill="#fff8d8" stroke="#504030"/><path d="M13 0.5 V3 H15.5" stroke="#504030" fill="none"/><path d="M3 1 L6 3 L8 2 L10 5 L9 9 L4 9 L2 6 Z" fill="#f09030" shape-rendering="geometricPrecision"/><path d="M4 4 L6 6 L7 5 L7 8 L5 8 Z" fill="#fff0a0"/><path d="M1 9 H11 L7 13 V15 H5 V13 Z" fill="#403020"/></svg>
<div class="t" style="left:1136px;top:256px;font-size:11px;line-height:11px;">XiProgressBar.pas</div>
<svg style="left:1117px;top:271px" width="17" height="17" viewBox="0 0 17 17" shape-rendering="crispEdges"><path d="M6.5 0.5 H13 L15.5 3 V15.5 H6.5 Z" fill="#fff8d8" stroke="#504030"/><path d="M13 0.5 V3 H15.5" stroke="#504030" fill="none"/><path d="M3 1 L6 3 L8 2 L10 5 L9 9 L4 9 L2 6 Z" fill="#f09030" shape-rendering="geometricPrecision"/><path d="M4 4 L6 6 L7 5 L7 8 L5 8 Z" fill="#fff0a0"/><path d="M1 9 H11 L7 13 V15 H5 V13 Z" fill="#403020"/></svg>
<div class="t" style="left:1136px;top:274px;font-size:11px;line-height:11px;">XiTrackBar.pas</div>
<div class="t" style="left:1119px;top:184px;font-size:11px;line-height:11px;">Contains</div>
<div class="t" style="left:1119px;top:292px;font-size:11px;line-height:11px;">Requires</div>
<svg style="left:1117px;top:307px" width="15" height="16" viewBox="0 0 15 16" shape-rendering="crispEdges"><rect x="1.5" y="0.5" width="12" height="14" fill="#fff" stroke="#303050"/><rect x="1.5" y="0.5" width="12" height="3" fill="#405080"/><rect x="4" y="6" width="7" height="5" fill="#c0c0d0"/><rect x="5" y="7" width="2" height="2" fill="#303050"/><rect x="8" y="8" width="2" height="2" fill="#303050"/></svg>
<div class="t" style="left:1136px;top:310px;font-size:11px;line-height:11px;">rtl.dcp</div>
<svg style="left:1117px;top:325px" width="15" height="16" viewBox="0 0 15 16" shape-rendering="crispEdges"><rect x="1.5" y="0.5" width="12" height="14" fill="#fff" stroke="#303050"/><rect x="1.5" y="0.5" width="12" height="3" fill="#405080"/><rect x="4" y="6" width="7" height="5" fill="#c0c0d0"/><rect x="5" y="7" width="2" height="2" fill="#303050"/><rect x="8" y="8" width="2" height="2" fill="#303050"/></svg>
<div class="t" style="left:1136px;top:328px;font-size:11px;line-height:11px;">vcl.dcp</div>
<div style="left:4px;top:795px;width:1273px;height:4px;background:#c0c0c0"></div>
<div class="ttl" style="left:4px;top:799px;width:629px;height:19px;border-radius:2px"></div>
<div class="t" style="left:31px;top:804px;font-size:11px;line-height:11px;">Event Log</div>
<svg style="left:603px;top:803px" width="8" height="11" viewBox="0 0 8 11" shape-rendering="crispEdges"><rect x="1" y="0" width="6" height="1" fill="#000"/><rect x="1" y="0" width="2" height="6" fill="#000"/><rect x="5" y="0" width="2" height="6" fill="#000"/><rect x="0" y="6" width="8" height="1" fill="#000"/><rect x="3" y="7" width="1" height="4" fill="#000"/></svg>
<svg style="left:619px;top:803px" width="11" height="11" viewBox="0 0 11 11" shape-rendering="crispEdges"><path d="M1 1 L10 10 M10 1 L1 10" stroke="#000" stroke-width="2.4" shape-rendering="geometricPrecision"/></svg>
<svg style="left:8px;top:801px" width="17" height="16" viewBox="0 0 17 16" shape-rendering="crispEdges"><path d="M4.5 4.5 H14.5 V15.5 H5.5 L4.5 14.5 Z" fill="#f8f8f0" stroke="#202020"/><path d="M6 7 H13 M6 9 H13 M6 11 H13 M6 13 H12" stroke="#5070a0" stroke-dasharray="1 1"/><g fill="#fff" stroke="#000" stroke-width="1.2"><rect x="1.5" y="1.5" width="4" height="3" rx="1"/><rect x="7.5" y="1.5" width="4" height="3" rx="1"/></g><path d="M5.5 2.5 H7.5 M0.5 1 L1.5 2" stroke="#000"/></svg>
<div style="left:8px;top:826px;width:624px;height:138px;background:#fff;border-left:1px solid #808080"></div>
<div style="left:9px;top:826px;width:622px;height:16px;background:#000"></div>
<div style="left:4px;top:964px;width:629px;height:6px;background:#c0c0c0"></div>
<div style="left:4px;top:971px;width:629px;height:21px;background:#e0e0e0"></div>
<div style="left:4px;top:970px;width:629px;height:1px;background:#000"></div>
<div style="left:11px;top:970px;width:74px;height:20px;background:#c8c8c8;border:1px solid #000;border-top:none;border-bottom-left-radius:2px"></div>
<svg style="left:14px;top:972px" width="17" height="17" viewBox="0 0 17 17" shape-rendering="crispEdges"><path d="M4.5 4.5 H14.5 V15.5 H5.5 L4.5 14.5 Z" fill="#f8f8f0" stroke="#202020"/><path d="M6 7 H13 M6 9 H13 M6 11 H13 M6 13 H12" stroke="#5070a0" stroke-dasharray="1 1"/><g fill="#fff" stroke="#000" stroke-width="1.2"><rect x="1.5" y="1.5" width="4" height="3" rx="1"/><rect x="7.5" y="1.5" width="4" height="3" rx="1"/></g><path d="M5.5 2.5 H7.5 M0.5 1 L1.5 2" stroke="#000"/></svg>
<div class="t" style="left:32px;top:977px;font-size:11px;line-height:11px;">Event Log</div>
<svg style="left:89px;top:972px" width="17" height="17" viewBox="0 0 17 17" shape-rendering="crispEdges"><circle cx="5" cy="5" r="4" fill="#e02020"/><circle cx="10" cy="10" r="4" fill="#f0a020" stroke="#805010"/><circle cx="5" cy="13" r="3" fill="#f0a020" stroke="#805010"/><path d="M0 10 L3 13 L0 16 Z" fill="#000"/></svg>
<div class="t" style="left:107px;top:977px;font-size:11px;line-height:11px;">Breakpoint List</div>
<div style="left:180px;top:973px;width:1px;height:16px;background:#909090"></div>
<svg style="left:187px;top:972px" width="17" height="17" viewBox="0 0 17 17" shape-rendering="crispEdges"><circle cx="5" cy="5" r="4" fill="#e02020"/><path d="M4 9 L14 4 L16 10 L6 15 Z" fill="#50a0d0" stroke="#103050"/><rect x="2" y="12" width="5" height="4" fill="#203040"/></svg>
<div class="t" style="left:204px;top:977px;font-size:11px;line-height:11px;">Thread Status</div>
<div style="left:276px;top:973px;width:1px;height:16px;background:#909090"></div>
<div style="left:633px;top:799px;width:7px;height:170px;background:#c0c0c0"></div>
<div class="ttl" style="left:640px;top:799px;width:636px;height:19px;border-radius:2px"></div>
<div class="t" style="left:0px;top:804px;font-size:11px;line-height:11px;"></div>
<svg style="left:1246px;top:803px" width="8" height="11" viewBox="0 0 8 11" shape-rendering="crispEdges"><rect x="1" y="0" width="6" height="1" fill="#000"/><rect x="1" y="0" width="2" height="6" fill="#000"/><rect x="5" y="0" width="2" height="6" fill="#000"/><rect x="0" y="6" width="8" height="1" fill="#000"/><rect x="3" y="7" width="1" height="4" fill="#000"/></svg>
<svg style="left:1262px;top:803px" width="11" height="11" viewBox="0 0 11 11" shape-rendering="crispEdges"><path d="M1 1 L10 10 M10 1 L1 10" stroke="#000" stroke-width="2.4" shape-rendering="geometricPrecision"/></svg>
<svg style="left:645px;top:802px" width="16" height="13" viewBox="0 0 16 13" shape-rendering="crispEdges"><rect x="1.5" y="0.5" width="13" height="11" fill="#fff8e0" stroke="#706040"/><rect x="1.5" y="0.5" width="13" height="2" fill="#4070a0"/><path d="M4 6 H6 M10 6 H12 M6 9 H10" stroke="#303030"/></svg>
<div style="left:640px;top:819px;width:637px;height:149px;background:#fff"></div>
<div style="left:641px;top:819px;width:619px;height:147px;overflow:hidden">
<div class="t" style="left:36px;top:-10px;font-size:11px;line-height:11px;letter-spacing:-0.1px">[Warning] XiButton.pas(265): W1036 Variable &#39;FaceColor&#39; might not have been initialized</div>
<div class="t" style="left:36px;top:8px;font-size:11px;line-height:11px;letter-spacing:-0.1px">[Warning] XiButton.pas(270): W1036 Variable &#39;TextColor&#39; might not have been initialized</div>
<div class="t" style="left:36px;top:26px;font-size:11px;line-height:11px;letter-spacing:-0.1px">[Warning] XiButton.pas(266): W1036 Variable &#39;GradColor&#39; might not have been initialized</div>
<div class="t" style="left:36px;top:44px;font-size:11px;line-height:11px;letter-spacing:-0.1px">[Warning] XiButton.pas(353): W1036 Variable &#39;LightColor&#39; might not have been initialized</div>
<div class="t" style="left:36px;top:62px;font-size:11px;line-height:11px;letter-spacing:-0.1px">[Warning] XiButton.pas(358): W1036 Variable &#39;DarkColor&#39; might not have been initialized</div>
<div class="t" style="left:36px;top:80px;font-size:11px;line-height:11px;letter-spacing:-0.1px">[Warning] XiButton.pas(323): W1036 Variable &#39;GlyphTop&#39; might not have been initialized</div>
<div class="t" style="left:36px;top:98px;font-size:11px;line-height:11px;letter-spacing:-0.1px">[Hint] XiButton.pas(72): H2219 Private symbol &#39;SetCancel&#39; declared but never used</div>
<div class="t" style="left:36px;top:116px;font-size:11px;line-height:11px;letter-spacing:-0.1px">[Hint] XiButton.pas(74): H2219 Private symbol &#39;SetHotTrack&#39; declared but never used</div>
</div>
<div style="left:641px;top:949px;width:619px;height:17px;background:#000080"></div>
<svg style="left:650px;top:953px" width="5" height="9" viewBox="0 0 5 9" shape-rendering="crispEdges"><path d="M0 0 L5 4.5 L0 9 Z" fill="#000"/></svg>
<div class="t" style="left:677px;top:953px;font-size:11px;line-height:11px;color:#fff;letter-spacing:-0.1px">[Fatal Error] XiButton.pas(989): F2039 Could not create output file &#39;.&#x20A9;Dcu&#x20A9;XiButton.dcu&#39;</div>
<div class="dith" style="left:1260px;top:819px;width:16px;height:148px;"></div>
<div class="r2" style="left:1260px;top:820px;width:16px;height:15px;"></div>
<svg style="left:1264px;top:825px" width="8" height="4" viewBox="0 0 8 4" shape-rendering="crispEdges"><path d="M0 4 L4 0 L8 4 Z" fill="#000"/></svg>
<div class="r2" style="left:1260px;top:857px;width:16px;height:93px;"></div>
<div class="r2" style="left:1260px;top:950px;width:16px;height:16px;"></div>
<svg style="left:1264px;top:956px" width="8" height="4" viewBox="0 0 8 4" shape-rendering="crispEdges"><path d="M0 0 L8 0 L4 4 Z" fill="#000"/></svg>
<div style="left:640px;top:970px;width:637px;height:22px;background:#e0e0e0"></div>
<div style="left:640px;top:969px;width:637px;height:1px;background:#000"></div>
<div style="left:651px;top:969px;width:49px;height:21px;background:#c8c8c8;border:1px solid #000;border-top:none;border-bottom-left-radius:2px"></div>
<svg style="left:654px;top:970px" width="17" height="17" viewBox="0 0 17 17" shape-rendering="crispEdges"><g shape-rendering="geometricPrecision"><circle cx="8" cy="7" r="6" fill="#60a8e0" stroke="#204070"/><path d="M3 5 Q8 9 13 5 M8 1 V13" stroke="#e0f0ff" fill="none"/><rect x="3" y="13" width="10" height="3" fill="#808080"/></g></svg>
<div class="t" style="left:672px;top:976px;font-size:11px;line-height:11px;">Build</div>
<div class="t" style="left:703px;top:976px;font-size:11px;line-height:11px;">Search for &#39;jvthread&#39;</div>
<div style="left:805px;top:971px;width:1px;height:16px;background:#909090"></div>
<div style="left:1237px;top:973px;width:40px;height:22px;border-top:1px solid #fff;border-left:1px solid #fff"></div>
<div class="dith" style="left:1239px;top:975px;width:20px;height:19px;border-top:1px solid #808080;border-left:1px solid #808080"></div>
<div class="t" style="left:1240px;top:973px;font-family:Liberation Serif;font-size:20px;line-height:20px;font-weight:bold">A</div>
<svg style="left:1259px;top:977px" width="17" height="15" viewBox="0 0 17 15" shape-rendering="crispEdges"><g stroke="#000" stroke-width="1.1" fill="none" shape-rendering="crispEdges"><path d="M1.5 1 L3.5 3 M0.5 6 L3.5 7 M1 15 L4 10" shape-rendering="geometricPrecision" stroke-width="1.4"/><path d="M6 2.5 H16.5 M9.5 0 V4 M13.5 0 V4 M7.5 5.5 H15.5 V9.5 H7.5 Z M7.5 7.5 H15.5 M11.5 9.5 V12 M5 12.5 H17"/><path d="M11 12.5 L6 15 M12 12.5 L17 15" shape-rendering="geometricPrecision"/></g></svg>
<div style="left:0px;top:996px;width:1280px;height:28px;background:#c0c0c0"></div>
<div style="left:0px;top:997px;width:1280px;height:1px;background:#fff"></div>
<div class="r2" style="left:2px;top:1000px;width:49px;height:22px;"></div>
<svg style="left:4px;top:1003px" width="16" height="15" viewBox="0 0 16 15" shape-rendering="crispEdges"><rect x="2" y="1" width="6" height="6" fill="#f05020"/><rect x="9" y="0" width="6" height="6" fill="#50b030"/><rect x="1" y="8" width="6" height="6" fill="#3070e0"/><rect x="8" y="7" width="6" height="6" fill="#f0c020"/></svg>
<svg style="left:23px;top:1004px;overflow:visible" width="27" height="16" stroke="#000" stroke-width="1.8" shape-rendering="geometricPrecision"><path d="M3.5 1.4 L0.5 10.6" fill="none"/><path d="M3.5 4.6 L6.6 10.6" fill="none"/><path d="M8.8 0.0 L8.8 11.4" fill="none"/><path d="M12.5 0.8 L18.6 0.8" fill="none"/><path d="M15.5 0.8 L12.5 5.9" fill="none"/><path d="M15.5 2.7 L18.6 5.9" fill="none"/><path d="M20.1 0.0 L20.1 7.0" fill="none"/><path d="M20.1 3.5 L22.8 3.5" fill="none"/><path d="M13.3 7.9 L21.2 7.9 L21.2 12.0" fill="none"/></svg>
<svg style="left:59px;top:1003px" width="15" height="15" viewBox="0 0 15 15" shape-rendering="crispEdges"><rect x="0.5" y="0.5" width="14" height="14" rx="3" fill="#4a86d8" stroke="#1a3a80"/><rect x="3" y="3" width="9" height="9" fill="#e0f0ff"/><path d="M5 10 L11 4" stroke="#2050a0" stroke-width="2"/></svg>
<svg style="left:82px;top:1003px" width="16" height="16" viewBox="0 0 16 16" shape-rendering="crispEdges"><ellipse cx="8" cy="8.5" rx="7" ry="6.5" fill="#3a8ae0"/><ellipse cx="8" cy="8.5" rx="4" ry="3.5" fill="#e8f4ff"/><rect x="4" y="8" width="8" height="1.5" fill="#3a8ae0"/><path d="M1 4 Q8 -2 15 3" stroke="#f0c040" fill="none" stroke-width="1.2" shape-rendering="geometricPrecision"/></svg>
<svg style="left:105px;top:1003px" width="17" height="15" viewBox="0 0 17 15" shape-rendering="crispEdges"><rect x="9.5" y="0.5" width="6" height="13" fill="#e0e0e0" stroke="#606060"/><rect x="0.5" y="3.5" width="12" height="10" fill="#80a8d0" stroke="#305080"/><circle cx="6.5" cy="8.5" r="3" fill="none" stroke="#fff" stroke-width="1.5"/></svg>
<div class="sk2 dith" style="left:128px;top:1000px;width:149px;height:22px;"></div>
<svg style="left:134px;top:1002px" width="16" height="16" viewBox="0 0 16 16" shape-rendering="crispEdges"><path d="M3 4 L7 1 L13 2 L15 6 L12 6 Z" fill="#c01010"/><ellipse cx="9" cy="10" rx="5" ry="5" fill="#e0a020"/><path d="M5 9 L10 8 L10 12 L6 14 Z" fill="#f8d870"/><rect x="3" y="13" width="5" height="2" fill="#a06010"/></svg>
<div class="t" style="left:154px;top:1004px;font-size:13px;line-height:13px;font-weight:bold;letter-spacing:0.6px">XiControls - Bo...</div>
<div class="r2" style="left:279px;top:1000px;width:150px;height:22px;"></div>
<svg style="left:284px;top:1002px" width="16" height="17" viewBox="0 0 16 17" shape-rendering="crispEdges"><path d="M3 1 H10 L6 15" stroke="#d0a020" stroke-width="2.5" fill="none"/><circle cx="10" cy="10" r="4" fill="#2080c0"/><circle cx="9" cy="9" r="1.5" fill="#80e040"/></svg>
<div class="t" style="left:305px;top:1004px;font-size:13px;line-height:13px;letter-spacing:-0.2px">Delphi 7</div>
<div class="r2" style="left:431px;top:1000px;width:148px;height:22px;"></div>
<svg style="left:435px;top:1003px" width="16" height="16" viewBox="0 0 16 16" shape-rendering="crispEdges"><path d="M2.5 0.5 H11 L14.5 4 V15.5 H2.5 Z" fill="#fff" stroke="#404040"/><ellipse cx="6" cy="9" rx="5" ry="4.5" fill="#2f6fd0"/><ellipse cx="6" cy="9" rx="2.5" ry="2" fill="#fff"/><rect x="3" y="8.5" width="6" height="1" fill="#2f6fd0"/></svg>
<div class="t" style="left:455px;top:1004px;font-size:13px;line-height:13px;letter-spacing:0.1px">DeadLogic - Micro...</div>
<div class="r2" style="left:582px;top:1000px;width:148px;height:22px;"></div>
<svg style="left:586px;top:1003px" width="16" height="16" viewBox="0 0 16 16" shape-rendering="crispEdges"><path d="M2.5 0.5 H11 L14.5 4 V15.5 H2.5 Z" fill="#fff" stroke="#404040"/><ellipse cx="6" cy="9" rx="5" ry="4.5" fill="#2f6fd0"/><ellipse cx="6" cy="9" rx="2.5" ry="2" fill="#fff"/><rect x="3" y="8.5" width="6" height="1" fill="#2f6fd0"/></svg>
<div class="t" style="left:606px;top:1004px;font-size:13px;line-height:13px;letter-spacing:0.1px">xicontrols 2005 - G...</div>
<div class="r2" style="left:733px;top:1000px;width:148px;height:22px;"></div>
<svg style="left:737px;top:1003px" width="16" height="16" viewBox="0 0 16 16" shape-rendering="crispEdges"><path d="M2.5 0.5 H11 L14.5 4 V15.5 H2.5 Z" fill="#fff" stroke="#404040"/><ellipse cx="6" cy="9" rx="5" ry="4.5" fill="#2f6fd0"/><ellipse cx="6" cy="9" rx="2.5" ry="2" fill="#fff"/><rect x="3" y="8.5" width="6" height="1" fill="#2f6fd0"/></svg>
<div class="t" style="left:757px;top:1004px;font-size:13px;line-height:13px;letter-spacing:0.1px">deadlogics - Micro...</div>
<div class="r2" style="left:884px;top:1000px;width:148px;height:22px;"></div>
<svg style="left:888px;top:1003px" width="16" height="16" viewBox="0 0 16 16" shape-rendering="crispEdges"><path d="M2.5 0.5 H11 L14.5 4 V15.5 H2.5 Z" fill="#fff" stroke="#404040"/><ellipse cx="6" cy="9" rx="5" ry="4.5" fill="#2f6fd0"/><ellipse cx="6" cy="9" rx="2.5" ry="2" fill="#fff"/><rect x="3" y="8.5" width="6" height="1" fill="#2f6fd0"/></svg>
<svg style="left:908px;top:1004px;overflow:visible" width="116" height="15" stroke="#000" stroke-width="1.0" shape-rendering="geometricPrecision"><path d="M2.7 0.0 L2.7 3.3 L8.3 3.3 L8.3 0.0" fill="none"/><path d="M2.7 1.8 L8.3 1.8" fill="none"/><path d="M5.5 3.4 L5.5 5.1" fill="none"/><path d="M0.0 5.1 L11.0 5.1" fill="none"/><path d="M2.2 7.0 L8.5 7.0 L8.5 8.9 L2.5 8.9 L2.5 10.8 L8.8 10.8" fill="none"/><path d="M13.0 0.7 L18.7 0.7 L18.7 3.0 L13.3 3.0 L13.3 5.2 L19.1 5.2" fill="none"/><path d="M20.0 0.0 L20.0 6.4" fill="none"/><path d="M20.0 3.2 L21.5 3.2" fill="none"/><path d="M22.6 0.0 L22.6 6.4" fill="none"/><path d="M14.2 7.0 L14.2 10.8 L22.1 10.8" fill="none"/><path d="M33.8 0.3 L27.5 0.3 L27.5 5.2 L33.8 5.2" fill="none"/><path d="M25.0 8.2 L36.0 8.2" fill="none"/><path d="M39.7 0.3 L46.3 0.3" fill="none"/><path d="M41.7 0.3 L41.7 5.2" fill="none"/><path d="M44.3 0.3 L44.3 5.2" fill="none"/><path d="M39.7 5.2 L46.3 5.2" fill="none"/><path d="M43.0 6.0 L43.0 8.8" fill="none"/><path d="M37.5 8.8 L48.5 8.8" fill="none"/><path d="M50.5 0.7 L56.2 0.7 L56.2 3.0 L50.8 3.0 L50.8 5.2 L56.5 5.2" fill="none"/><path d="M56.8 3.2 L59.2 3.2" fill="none"/><path d="M59.2 0.0 L59.2 6.4" fill="none"/><path d="M51.7 7.2 L59.2 7.2 L59.2 10.8 L51.7 10.8 L51.7 7.2" fill="none"/><text x="62.50" y="11" font-family="Liberation Sans" font-size="13" font-weight="normal" fill="#000" stroke="none" xml:space="preserve"> - </text><path d="M77.6 1.3 L74.5 9.7" fill="none"/><path d="M77.6 4.2 L80.6 9.7" fill="none"/><path d="M81.5 0.0 L81.5 10.4" fill="none"/><path d="M81.5 5.2 L83.1 5.2" fill="none"/><path d="M84.2 0.0 L84.2 10.4" fill="none"/><path d="M89.0 0.2 L94.8 0.2 L94.8 3.5" fill="none"/><path d="M86.5 4.7 L97.5 4.7" fill="none"/><path d="M88.7 7.0 L95.0 7.0 L95.0 8.9 L89.1 8.9 L89.1 10.8 L95.3 10.8" fill="none"/><text x="99.05" y="11" font-family="Liberation Sans" font-size="13" font-weight="normal" fill="#000" stroke="none" xml:space="preserve"> ...</text></svg>
<div class="r2" style="left:1035px;top:1000px;width:148px;height:22px;"></div>
<svg style="left:1039px;top:1003px" width="16" height="16" viewBox="0 0 16 16" shape-rendering="crispEdges"><path d="M2.5 0.5 H11 L14.5 4 V15.5 H2.5 Z" fill="#fff" stroke="#404040"/><ellipse cx="6" cy="9" rx="5" ry="4.5" fill="#2f6fd0"/><ellipse cx="6" cy="9" rx="2.5" ry="2" fill="#fff"/><rect x="3" y="8.5" width="6" height="1" fill="#2f6fd0"/></svg>
<svg style="left:1059px;top:1004px;overflow:visible" width="115" height="15" stroke="#000" stroke-width="1.0" shape-rendering="geometricPrecision"><path d="M6.6 0.7 L0.8 0.7 L0.8 5.2 L6.6 5.2" fill="none"/><path d="M6.8 3.2 L8.6 3.2" fill="none"/><path d="M8.6 0.0 L8.6 6.4" fill="none"/><path d="M10.3 0.0 L10.3 6.4" fill="none"/><path d="M1.3 7.2 L9.2 7.2 L9.2 9.0 L1.7 9.0 L1.7 10.8 L9.6 10.8" fill="none"/><path d="M13.0 1.7 L19.1 1.7" fill="none"/><path d="M14.8 1.7 L14.8 9.3" fill="none"/><path d="M17.2 1.7 L17.2 9.3" fill="none"/><path d="M13.0 9.3 L19.1 9.3" fill="none"/><path d="M20.6 0.0 L20.6 10.4" fill="none"/><path d="M20.6 5.2 L23.3 5.2" fill="none"/><ellipse cx="28.5" cy="5.5" rx="2.7" ry="3.8" fill="none"/><path d="M33.8 0.0 L33.8 10.4" fill="none"/><text x="37.50" y="11" font-family="Liberation Sans" font-size="13" font-weight="normal" fill="#000" stroke="none" xml:space="preserve"> </text><path d="M43.3 0.3 L49.9 0.3" fill="none"/><path d="M45.3 0.3 L45.3 5.2" fill="none"/><path d="M47.9 0.3 L47.9 5.2" fill="none"/><path d="M43.3 5.2 L49.9 5.2" fill="none"/><path d="M46.6 6.0 L46.6 8.8" fill="none"/><path d="M41.1 8.8 L52.1 8.8" fill="none"/><path d="M54.1 0.7 L59.9 0.7 L59.9 3.0 L54.4 3.0 L54.4 5.2 L60.2 5.2" fill="none"/><path d="M60.4 3.2 L62.8 3.2" fill="none"/><path d="M62.8 0.0 L62.8 6.4" fill="none"/><path d="M55.3 7.2 L62.8 7.2 L62.8 10.8 L55.3 10.8 L55.3 7.2" fill="none"/><text x="66.11" y="11" font-family="Liberation Sans" font-size="13" font-weight="normal" fill="#000" stroke="none" xml:space="preserve"> / </text><path d="M79.7 0.0 L79.7 3.3 L85.2 3.3 L85.2 0.0" fill="none"/><path d="M79.7 1.8 L85.2 1.8" fill="none"/><path d="M82.4 3.4 L82.4 5.1" fill="none"/><path d="M76.9 5.1 L87.9 5.1" fill="none"/><path d="M79.1 7.0 L85.4 7.0 L85.4 8.9 L79.5 8.9 L79.5 10.8 L85.7 10.8" fill="none"/><path d="M89.9 0.7 L95.7 0.7 L95.7 3.0 L90.2 3.0 L90.2 5.2 L96.0 5.2" fill="none"/><path d="M96.9 0.0 L96.9 6.4" fill="none"/><path d="M96.9 3.2 L98.5 3.2" fill="none"/><path d="M99.6 0.0 L99.6 6.4" fill="none"/><path d="M91.2 7.0 L91.2 10.8 L99.0 10.8" fill="none"/><text x="101.94" y="11" font-family="Liberation Sans" font-size="13" font-weight="normal" fill="#000" stroke="none" xml:space="preserve">...</text></svg>
<div class="sk" style="left:1191px;top:1000px;width:86px;height:22px;"></div>
<div class="t" style="left:1197px;top:1005px;font-size:12px;line-height:12px;font-weight:bold">&laquo;</div>
<svg style="left:1218px;top:1004px;overflow:visible" width="55" height="15" stroke="#000" stroke-width="1.1" shape-rendering="geometricPrecision"><ellipse cx="5.5" cy="2.8" rx="3.0" ry="2.5" fill="none"/><path d="M5.5 6.0 L5.5 8.8" fill="none"/><path d="M0.0 8.8 L11.0 8.8" fill="none"/><path d="M16.7 0.3 L19.3 0.3" fill="none"/><path d="M14.7 1.6 L21.3 1.6" fill="none"/><ellipse cx="18.0" cy="3.8" rx="2.0" ry="1.6" fill="none"/><path d="M12.5 7.2 L23.5 7.2" fill="none"/><path d="M18.0 7.2 L18.0 11.0" fill="none"/><text x="25.00" y="11" font-family="Liberation Sans" font-size="12.5" font-weight="normal" fill="#000" stroke="none" xml:space="preserve"> 2:08</text></svg>
</body></html>
